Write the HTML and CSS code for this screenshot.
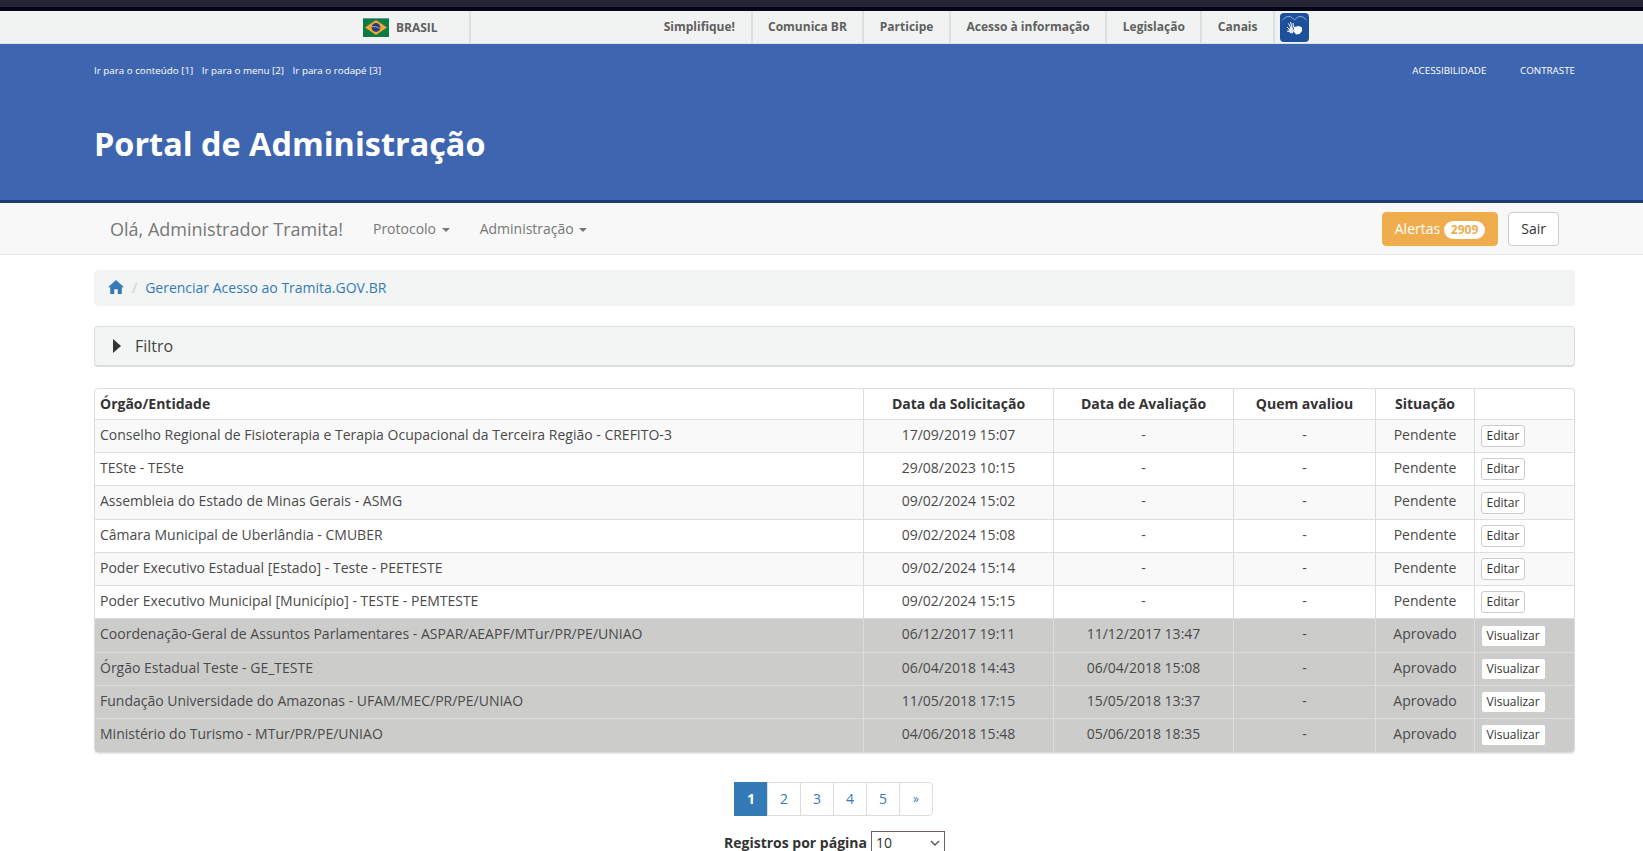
FILE: index.html
```html
<!DOCTYPE html>
<html lang="pt-BR">
<head>
  <meta charset="UTF-8" />
  <title>Portal de Administração</title>
  <link rel="stylesheet" href="styles.css">
</head>
<body>
  <div class="top-strip"></div>

  <div class="barra-brasil">
    <div class="barra-pais">
      <svg class="flag" viewBox="0 0 26 19" width="26" height="19">
        <rect width="26" height="19" fill="#0b7a45"/>
        <rect width="26" height="1" fill="#5c9c94"/>
        <polygon points="13,2 24,9.5 13,17 2,9.5" fill="#f0a830"/>
        <circle cx="13" cy="9.5" r="4.4" fill="#2b3a80"/>
        <path d="M8.8 8.6 Q13 8 17.2 10.4" fill="none" stroke="#cfd6e6" stroke-width="0.7"/>
      </svg>
      <span>BRASIL</span>
    </div>
    <ul class="barra-links">
      <li>Simplifique!</li>
      <li>Comunica BR</li>
      <li>Participe</li>
      <li>Acesso à informação</li>
      <li>Legislação</li>
      <li>Canais</li>
    </ul>
    <div class="vlibras">
      <svg viewBox="0 0 29 29" width="29" height="29">
        <rect width="29" height="29" rx="4" fill="#1c4f9c"/>
        <path d="M2.5 7 Q6 2.5 10 3.5 Q12.5 4.5 14.5 7 Q16.5 4.5 19 3.5 Q23 2.5 26.5 7" fill="none" stroke="#a9c0e0" stroke-width="0.8"/>
        <path d="M14 14 L19 13 L22 14.5 L22 18 L19.5 21 L16 21.5 L14 19 Z" fill="#fff"/>
        <path d="M9 16 L11 13.5 L13 15 L14 18 L12.5 20.5 L10 20 L8.5 18 Z" fill="#dfe7f3"/>
        <path d="M8.5 10.5 L11 15 M10.5 9 L12 14 M13 10 L13.5 14.5 M7 14 L9.5 16.5 M7 18 L9 18.5" stroke="#fff" stroke-width="1" fill="none"/>
      </svg>
    </div>
  </div>

  <header class="portal-header">
    <div class="container">
      <div class="header-top">
        <div class="skip-links">
          <a>Ir para o conteúdo [1]</a>
          <a>Ir para o menu [2]</a>
          <a>Ir para o rodapé [3]</a>
        </div>
        <div class="access-links">
          <a>ACESSIBILIDADE</a>
          <a>CONTRASTE</a>
        </div>
      </div>
      <h1>Portal de Administração</h1>
    </div>
  </header>

  <nav class="navbar">
    <div class="container navbar-inner">
      <span class="navbar-brand">Olá, Administrador Tramita!</span>
      <a class="nav-item">Protocolo <b class="caret"></b></a>
      <a class="nav-item">Administração <b class="caret"></b></a>
      <div class="navbar-right">
        <a class="btn btn-warning">Alertas <span class="badge">2909</span></a>
        <a class="btn btn-default">Sair</a>
      </div>
    </div>
  </nav>

  <main class="container">
    <div class="breadcrumb">
      <svg class="home" viewBox="0 0 16 14" width="16" height="14">
        <path d="M8 0 L16 7.2 L13.8 7.2 L13.8 14 L9.8 14 L9.8 9.2 L6.2 9.2 L6.2 14 L2.2 14 L2.2 7.2 L0 7.2 Z" fill="#337ab7"/>
      </svg>
      <span class="sep">/</span>
      <a>Gerenciar Acesso ao Tramita.GOV.BR</a>
    </div>

    <div class="panel-filtro">
      <i class="arrow"></i>
      <span>Filtro</span>
    </div>

    <div class="table-wrap">
      <table class="grid">
        <colgroup>
          <col class="col-orgao">
          <col class="col-sol">
          <col class="col-ava">
          <col class="col-quem">
          <col class="col-sit">
          <col>
        </colgroup>
        <thead>
          <tr>
            <th class="left">Órgão/Entidade</th>
            <th>Data da Solicitação</th>
            <th>Data de Avaliação</th>
            <th>Quem avaliou</th>
            <th>Situação</th>
            <th></th>
          </tr>
        </thead>
        <tbody>
          <tr>
            <td class="left">Conselho Regional de Fisioterapia e Terapia Ocupacional da Terceira Região - CREFITO-3</td>
            <td>17/09/2019 15:07</td><td>-</td><td>-</td><td>Pendente</td>
            <td class="acao"><a class="btn-xs">Editar</a></td>
          </tr>
          <tr>
            <td class="left">TESte - TESte</td>
            <td>29/08/2023 10:15</td><td>-</td><td>-</td><td>Pendente</td>
            <td class="acao"><a class="btn-xs">Editar</a></td>
          </tr>
          <tr>
            <td class="left">Assembleia do Estado de Minas Gerais - ASMG</td>
            <td>09/02/2024 15:02</td><td>-</td><td>-</td><td>Pendente</td>
            <td class="acao"><a class="btn-xs">Editar</a></td>
          </tr>
          <tr>
            <td class="left">Câmara Municipal de Uberlândia - CMUBER</td>
            <td>09/02/2024 15:08</td><td>-</td><td>-</td><td>Pendente</td>
            <td class="acao"><a class="btn-xs">Editar</a></td>
          </tr>
          <tr>
            <td class="left">Poder Executivo Estadual [Estado] - Teste - PEETESTE</td>
            <td>09/02/2024 15:14</td><td>-</td><td>-</td><td>Pendente</td>
            <td class="acao"><a class="btn-xs">Editar</a></td>
          </tr>
          <tr>
            <td class="left">Poder Executivo Municipal [Município] - TESTE - PEMTESTE</td>
            <td>09/02/2024 15:15</td><td>-</td><td>-</td><td>Pendente</td>
            <td class="acao"><a class="btn-xs">Editar</a></td>
          </tr>
          <tr class="aprovado">
            <td class="left">Coordenação-Geral de Assuntos Parlamentares - ASPAR/AEAPF/MTur/PR/PE/UNIAO</td>
            <td>06/12/2017 19:11</td><td>11/12/2017 13:47</td><td>-</td><td>Aprovado</td>
            <td class="acao"><a class="btn-xs">Visualizar</a></td>
          </tr>
          <tr class="aprovado">
            <td class="left">Órgão Estadual Teste - GE_TESTE</td>
            <td>06/04/2018 14:43</td><td>06/04/2018 15:08</td><td>-</td><td>Aprovado</td>
            <td class="acao"><a class="btn-xs">Visualizar</a></td>
          </tr>
          <tr class="aprovado">
            <td class="left">Fundação Universidade do Amazonas - UFAM/MEC/PR/PE/UNIAO</td>
            <td>11/05/2018 17:15</td><td>15/05/2018 13:37</td><td>-</td><td>Aprovado</td>
            <td class="acao"><a class="btn-xs">Visualizar</a></td>
          </tr>
          <tr class="aprovado">
            <td class="left">Ministério do Turismo - MTur/PR/PE/UNIAO</td>
            <td>04/06/2018 15:48</td><td>05/06/2018 18:35</td><td>-</td><td>Aprovado</td>
            <td class="acao"><a class="btn-xs">Visualizar</a></td>
          </tr>
        </tbody>
      </table>
    </div>

    <ul class="pagination">
      <li class="active">1</li>
      <li>2</li>
      <li>3</li>
      <li>4</li>
      <li>5</li>
      <li class="small">»</li>
    </ul>

    <div class="per-page">
      <label>Registros por página</label>
      <div class="select-wrap">
        <select>
          <option>10</option>
        </select>
        <svg class="chevron" viewBox="0 0 10 6" width="10" height="6">
          <path d="M1 1 L5 5 L9 1" fill="none" stroke="#555" stroke-width="1.4"/>
        </svg>
      </div>
    </div>
  </main>
</body>
</html>
```

FILE: styles.css
```css
html, body {
  margin: 0;
  padding: 0;
  height: 851px;
  overflow: hidden;
  background: #fff;
  font-family: "Open Sans", Arial, sans-serif;
  font-size: 14px;
  color: #333;
}
.container {
  width: 1481px;
  margin: 0 0 0 94px;
}
.top-strip {
  height: 7px;
  background: #242633;
  border-bottom: 4px solid #05051a;
}

/* barra do governo */
.barra-brasil {
  height: 32px;
  background: #f1f2f2;
  border-bottom: 1px solid #dfe1e1;
  display: flex;
  color: #606060;
  font-size: 12px;
  font-weight: 700;
}
.barra-pais {
  width: 106px;
  margin-left: 363px;
  display: flex;
  align-items: center;
  gap: 7px;
  border-right: 2px solid #dfdfdf;
}
.flag {
  display: block;
}
.barra-links {
  list-style: none;
  margin: 0 0 0 auto;
  padding: 0;
  display: flex;
}
.barra-links li {
  padding: 0 15.5px;
  line-height: 31px;
  border-right: 2px solid #dfdfdf;
  white-space: nowrap;
}
.vlibras {
  margin: 2px 334px 0 5px;
}

/* cabecalho azul */
.portal-header {
  height: 156px;
  background: #3e66b0;
  border-bottom: 3px solid #1f3a70;
  color: #fff;
}
.header-top {
  display: flex;
  justify-content: space-between;
  padding-top: 20px;
  font-size: 9.8px;
  line-height: 14px;
}
.skip-links a {
  margin-right: 6px;
}
.access-links a {
  margin-left: 31px;
}
.portal-header h1 {
  margin: 43px 0 0;
  font-size: 32.4px;
  line-height: 44px;
  font-weight: 700;
}

/* navbar */
.navbar {
  height: 51px;
  background: #f8f8f8;
  border-bottom: 1px solid #e7e7e7;
}
.navbar-inner {
  display: flex;
  align-items: center;
  height: 51px;
  color: #777;
}
.navbar-brand {
  font-size: 18px;
  padding-left: 16px;
  margin-right: 30px;
}
.nav-item {
  margin-right: 30px;
}
.caret {
  display: inline-block;
  margin-left: 2px;
  vertical-align: middle;
  border-top: 4px solid #777;
  border-left: 4px solid transparent;
  border-right: 4px solid transparent;
}
.navbar-right {
  margin-left: auto;
  display: flex;
  gap: 10px;
  padding-right: 16px;
}
.btn {
  padding: 6px 12px;
  line-height: 20px;
  border-radius: 4px;
  border: 1px solid #ccc;
}
.btn-warning {
  background: #f0ad4e;
  border-color: #f0ad4e;
  color: #fff;
}
.btn-default {
  background: #fff;
  color: #333;
}
.badge {
  display: inline-block;
  background: #fff;
  color: #f0ad4e;
  font-size: 12px;
  font-weight: 700;
  line-height: 12px;
  padding: 3px 7px;
  border-radius: 10px;
}

/* breadcrumb */
.breadcrumb {
  margin-top: 15px;
  height: 36px;
  padding: 0 15px 2px 14px;
  box-sizing: border-box;
  background: #f3f4f4;
  border-radius: 4px;
  display: flex;
  align-items: center;
  color: #ccc;
}
.breadcrumb a {
  color: #337ab7;
}
.sep {
  margin: 0 8px 0 8px;
}

/* filtro */
.panel-filtro {
  margin-top: 20px;
  height: 41px;
  box-sizing: border-box;
  background: #f3f4f4;
  border: 1px solid #ddd;
  border-bottom-width: 2px;
  border-radius: 4px;
  display: flex;
  align-items: center;
  gap: 14px;
  padding-left: 18px;
  font-size: 16px;
  color: #444;
}
.arrow {
  border-left: 8px solid #333;
  border-top: 7px solid transparent;
  border-bottom: 7px solid transparent;
}

/* tabela */
.table-wrap {
  margin-top: 21px;
  border: 1px solid #ddd;
  border-radius: 4px;
  box-shadow: 0 1px 1px rgba(0, 0, 0, 0.1);
  overflow: hidden;
}
.grid {
  width: 100%;
  border-collapse: collapse;
  table-layout: fixed;
}
.col-orgao { width: 768px; }
.col-sol { width: 190px; }
.col-ava { width: 180px; }
.col-quem { width: 142px; }
.col-sit { width: 99px; }
.grid th, .grid td {
  padding: 5px 5px 5px 6px;
  border: 1px solid #ddd;
  text-align: center;
  vertical-align: top;
  line-height: 20px;
  color: #4a4a4a;
}
.grid tr > *:first-child { border-left: 0; }
.grid tr > *:last-child { border-right: 0; }
.grid tr:first-child th { border-top: 0; }
.grid tbody tr:last-child td { border-bottom: 0; }
.grid th {
  font-weight: 700;
  color: #333;
}
.grid .left {
  text-align: left;
  padding-left: 5px;
}
.grid tbody tr {
  height: 33px;
}
.grid tbody tr:nth-child(3),
.grid tbody tr:nth-child(7) {
  height: 34px;
}
.grid tbody tr:nth-child(odd) {
  background: #f9f9f9;
}
.grid tbody tr.aprovado {
  background: #cccccb;
}
.grid td.acao {
  text-align: left;
  vertical-align: middle;
}
.btn-xs {
  display: block;
  width: fit-content;
  padding: 0 5px;
  font-size: 12px;
  line-height: 20px;
  color: #333;
  background: #fff;
  border: 1px solid #ccc;
  border-radius: 3px;
}

/* paginacao */
.pagination {
  list-style: none;
  margin: 29px 0 0;
  padding: 0 1px 0 0;
  display: flex;
  justify-content: center;
}
.pagination li {
  box-sizing: border-box;
  width: 34px;
  height: 34px;
  line-height: 32px;
  text-align: center;
  color: #337ab7;
  border: 1px solid #ddd;
  margin-left: -1px;
}
.pagination li.active {
  background: #337ab7;
  border-color: #337ab7;
  color: #fff;
  font-weight: 700;
}
.pagination li.small {
  font-size: 12px;
  border-radius: 0 4px 4px 0;
}
.per-page {
  margin-top: 15px;
  display: flex;
  justify-content: center;
  align-items: center;
  gap: 4px;
}
.per-page label {
  font-weight: 700;
}
.select-wrap {
  position: relative;
  height: 24px;
}
.select-wrap select {
  appearance: none;
  display: block;
  width: 74px;
  height: 24px;
  padding: 0 4px;
  font-family: inherit;
  font-size: 14px;
  background: #fff;
  color: #333;
  border: 1px solid #6f6067;
  border-radius: 0;
}
.chevron {
  position: absolute;
  right: 5px;
  top: 9px;
}
```
